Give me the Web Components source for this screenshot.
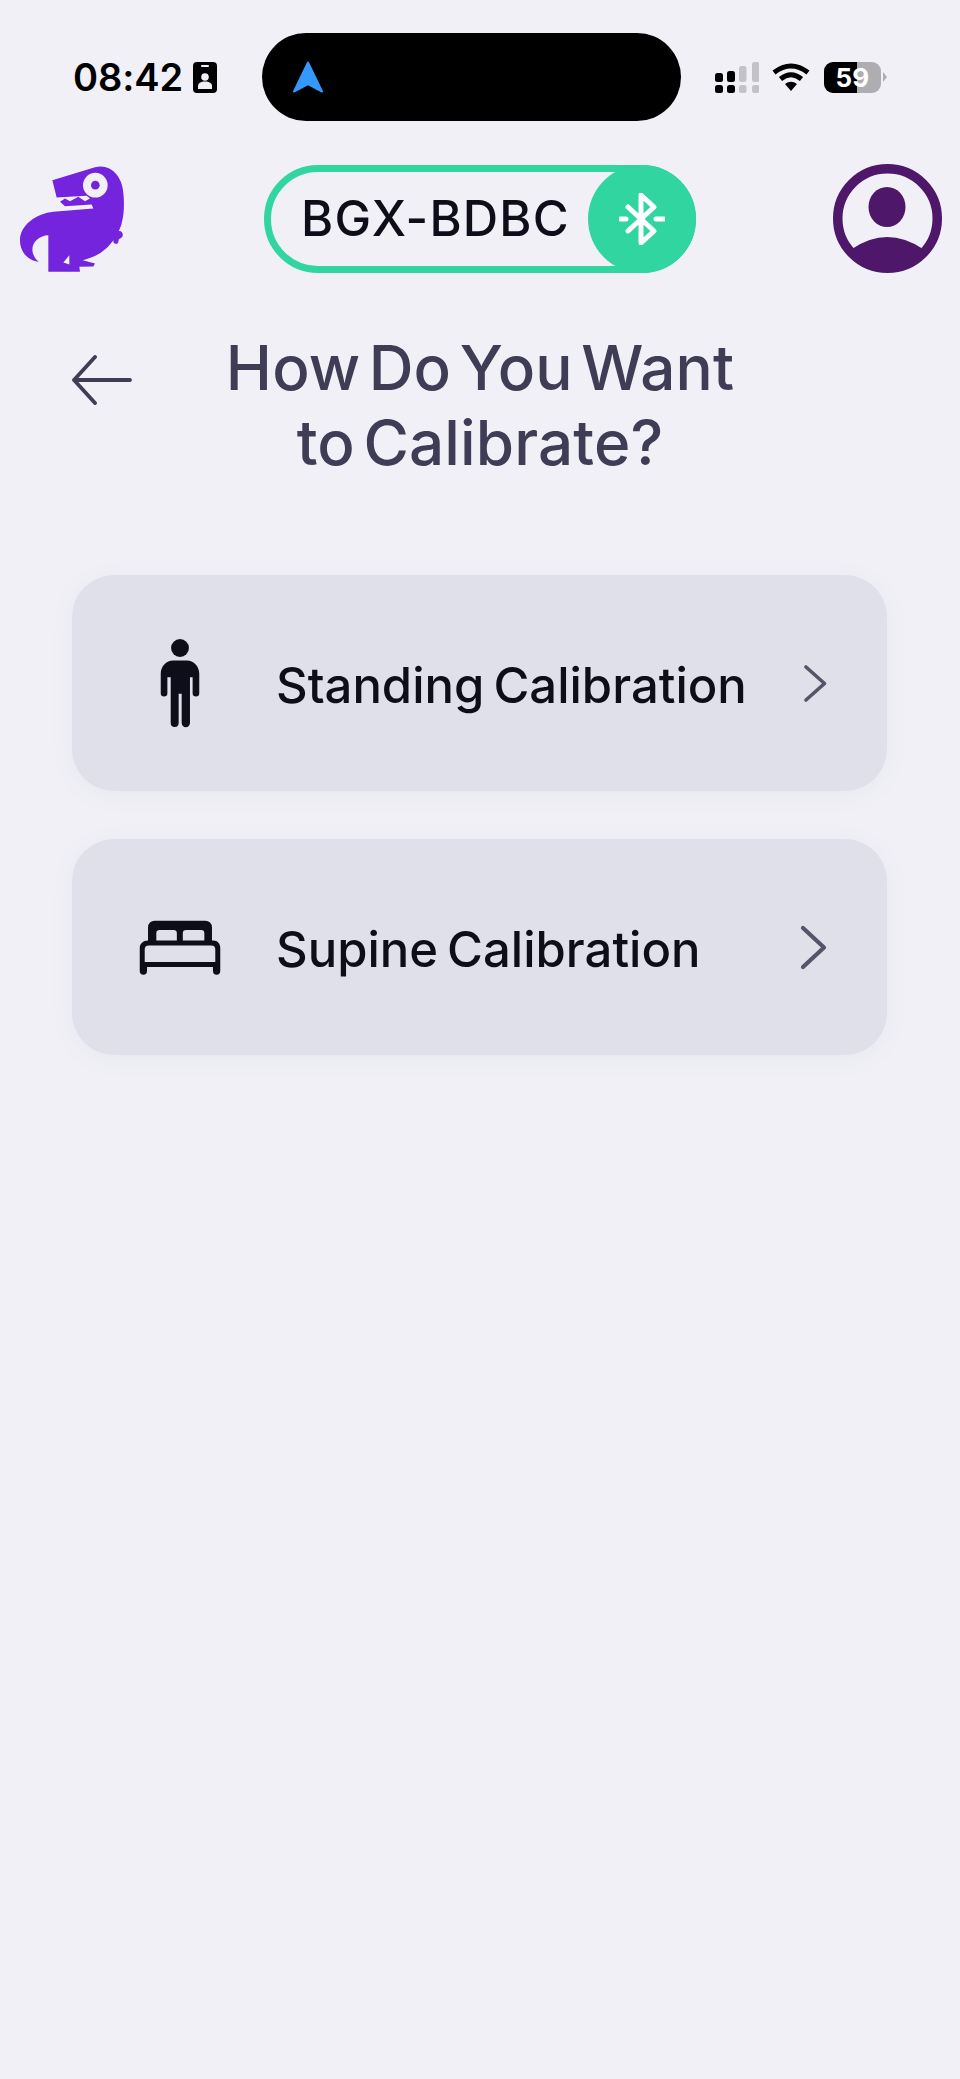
<!DOCTYPE html>
<html lang="en"><head><meta charset="utf-8"><title>Calibrate</title>
<style>
html,body{margin:0;padding:0;background:#f0f0f6}
body{width:960px;height:2079px;overflow:hidden;font-family:Inter,"Liberation Sans",sans-serif}
</style></head><body>
<app-screen>
  <status-bar></status-bar>
  <top-header name="BGX-BDBC"></top-header>
  <page-title>How Do You Want<br>to Calibrate?</page-title>
  <calibration-list>
    <calibration-card kind="standing">Standing Calibration</calibration-card>
    <calibration-card kind="supine">Supine Calibration</calibration-card>
  </calibration-list>
</app-screen>
<script>
function def(name,html,init){
  customElements.define(name,class extends HTMLElement{
    constructor(){super();this.attachShadow({mode:'open'}).innerHTML=html;}
    connectedCallback(){if(init)init(this,this.shadowRoot);}
  });
}
def('app-screen',`<style>:host{display:block;width:960px;height:2079px;background:#f0f0f6}</style><slot></slot>`);

def('status-bar',`<style>
:host{display:flex;align-items:center;padding-top:33px;height:88px;box-sizing:content-box}
.left{width:262px;box-sizing:border-box;padding-left:73px;display:flex;align-items:center;gap:12px}
.time{font:560 38px/1 Inter,sans-serif;color:#000;letter-spacing:-.1px;width:108px;white-space:nowrap}
.island{width:419px;height:88px;border-radius:44px;background:#000;display:flex;align-items:center;padding-left:31px;box-sizing:border-box}
.right{display:flex;align-items:center;padding-left:34px}
svg{display:block}
.bat{position:relative;display:flex;align-items:center;margin-left:14px}
.cell{width:57px;height:31px;border-radius:9px;background:linear-gradient(90deg,#000 0 33px,#aeaeb2 33px);color:#fff;font:700 26px/31px Inter,sans-serif;text-align:center;letter-spacing:.2px}
.nub{width:4px;height:10px;margin-left:2px;background:#aeaeb2;clip-path:polygon(0 0,100% 50%,0 100%)}
</style>
<div class="left"><span class="time">08:42</span>
<svg width="24" height="31" viewBox="0 0 24 31"><rect width="24" height="31" rx="4" fill="#000"/><rect x="8" y="3" width="8" height="2" rx="1" fill="#f0f0f6"/><circle cx="12" cy="15" r="3.800" fill="#f0f0f6"/><path d="M5 27v-3c0-3 3-4.500 7-4.500s7 1.500 7 4.500v3z" fill="#f0f0f6"/></svg></div>
<div class="island"><svg width="30" height="33" viewBox="0 0 30 33"><path d="M15 1.500 29 30.500 15 23 1 30.500Z" fill="#3399ff" stroke="#3399ff" stroke-width="2" stroke-linejoin="round"/></svg></div>
<div class="right">
<svg width="44" height="31" viewBox="0 0 44 31"><g fill="#000"><rect x="0" y="11" width="8" height="9" rx="2.500"/><rect x="12" y="9" width="8" height="11" rx="2.500"/><rect x="0" y="23" width="8" height="8" rx="2.500"/><rect x="12" y="23" width="8" height="8" rx="2.500"/></g><g fill="#c2c2c7"><rect x="24" y="4" width="7.500" height="16" rx="2.500"/><rect x="37" y="0" width="7.500" height="20" rx="2.500"/><rect x="24" y="23" width="7.500" height="8" rx="2.500"/><rect x="37" y="23" width="7.500" height="8" rx="2.500"/></g></svg>
<svg style="margin-left:13px" width="38" height="29" viewBox="0 0 38 29"><g fill="none" stroke="#000" stroke-width="5" stroke-linecap="butt"><path d="M2 9.500Q19-3.500 36 9.500"/><path d="M8.500 16Q19 7.500 29.500 16"/></g><path d="M13 21Q19 16.500 25 21L19 28Z" fill="#000"/></svg>
<div class="bat"><div class="cell">59</div><div class="nub"></div></div>
</div>`);

def('top-header',`<style>
:host{display:flex;align-items:center;height:109px;margin-top:43px;padding-left:20px}
svg{display:block;flex:none}
.pill{margin-left:139px;width:432px;height:108px;box-sizing:border-box;border:7px solid #30d5a0;border-radius:54px;display:flex;align-items:center;position:relative;padding-left:30px}
.name{font:500 49px/1 Inter,sans-serif;color:#0e0e1a;letter-spacing:1.200px;white-space:nowrap}
.bt{position:absolute;right:-7px;top:-7px;width:108px;height:108px;border-radius:50%;background:#30d5a0;display:flex;align-items:center;justify-content:center}
.avatar{margin-left:137px}
</style>
<svg width="105" height="106" viewBox="30 33 315 317"><path fill="#7424dc" fill-rule="evenodd" d="M127 75 255 36C300 25 340 60 341 125 344 170 338 205 326 228 332 225 340 232 338 242 336 250 328 250 326 254 326 260 324 268 316 266 310 264 308 256 312 252 290 285 260 305 218 315L255 325 250 334 208 335 210 350H115V240C85 240 58 268 70 298 74 308 80 316 87 320 60 318 30 295 30 255 30 210 80 175 130 170L250 160 245 148 165 153 150 140 165 130 180 138 205 125 225 138 240 130 230 122 140 127ZM160 322 178 328V300Z"/><circle cx="256" cy="90" r="37" fill="#f0f0f6"/><circle cx="256" cy="90" r="13" fill="#7424dc"/></svg>
<div class="pill"><span class="name"></span><div class="bt"><svg width="46" height="52" viewBox="0 0 46 52"><g fill="none" stroke="#fff" stroke-width="5" stroke-linecap="round" stroke-linejoin="round"><path d="M9 14 35 38 22 50V2L35 14 9 38"/><path d="M1 26H7M37 26H45"/></g></svg></div></div>
<svg class="avatar" width="109" height="109" viewBox="0 0 109 109"><circle cx="54.500" cy="54.500" r="49.750" fill="none" stroke="#4e1769" stroke-width="9.500"/><ellipse cx="54" cy="43" rx="18.500" ry="20" fill="#4e1769"/><path d="M19 85Q54 61 90 85A47 47 0 0 1 19 85Z" fill="#4e1769"/></svg>`,
(el,root)=>{root.querySelector('.name').textContent=el.getAttribute('name');});

def('page-title',`<style>
:host{display:grid;grid-template-columns:60px 1fr 60px;margin:57px 72px 95px;align-items:start}
h1{margin:0;text-align:center;font:540 62px/75px Inter,sans-serif;color:#3f3d56;letter-spacing:.1px;word-spacing:-8px;white-space:nowrap}
svg{display:block;margin-top:25px}
</style>
<svg width="60" height="50" viewBox="0 0 60 50"><path d="M58 25H2M23 2 2 25 23 48" fill="none" stroke="#3f3d56" stroke-width="3.800" stroke-linecap="round" stroke-linejoin="round"/></svg>
<h1><slot></slot></h1><div></div>`);

def('calibration-list',`<style>:host{display:flex;flex-direction:column;gap:48px;margin:0 73px 0 72px}</style><slot></slot>`);

const ICONS={
 standing:`<svg width="40" height="89" viewBox="300 235 120 268"><circle cx="360" cy="262" r="27" fill="#0e0e1a"/><path fill="#0e0e1a" d="M340 300H380C402 300 418 318 418 340V398A10 10 0 0 1 398 398V350H390V488A12 12 0 0 1 365 488V400H356V488A12 12 0 0 1 332 488V350H322V398A10 10 0 0 1 302 398V340C302 318 318 300 340 300Z"/></svg>`,
 supine:`<svg width="82" height="55" viewBox="238 268 247 166"><path fill="#0e0e1a" fill-rule="evenodd" d="M285 270H438A20 20 0 0 1 458 290V330H462C475 330 483 340 483 352V422A11 11 0 0 1 461 422V410H262V422A11 11 0 0 1 240 422V352C240 340 250 330 265 330V290A20 20 0 0 1 285 270ZM290 330V308A10 10 0 0 1 300 298H342A10 10 0 0 1 352 308V330ZM370 330V308A10 10 0 0 1 380 298H425A10 10 0 0 1 435 308V330ZM255 395V357A12 12 0 0 1 267 345H456A12 12 0 0 1 468 357V395Z"/></svg>`
};
const CHEV={
 standing:`<svg width="23" height="37" viewBox="0 0 23 37"><path d="M2 2 20.500 18.500 2 35" fill="none" stroke="#55556a" stroke-width="3.600" stroke-linecap="round" stroke-linejoin="round"/></svg>`,
 supine:`<svg width="27" height="45" viewBox="0 0 27 45"><path d="M3 3 24 22.500 3 42" fill="none" stroke="#55556a" stroke-width="4.200" stroke-linecap="round" stroke-linejoin="round"/></svg>`
};
def('calibration-card',`<style>
:host{display:flex;align-items:center;height:216px;border-radius:42px;background:#e0e0ea;box-shadow:0 4px 24px rgba(120,120,150,.06)}
.icon{width:100px;margin-left:58px;display:flex;justify-content:center;flex:none}
svg{display:block}
.text{margin-left:46px;flex:1;font:540 49px/1 Inter,sans-serif;color:#0e0e1a;letter-spacing:0;word-spacing:-4px;white-space:nowrap;padding-top:5px}
.chev{flex:none;display:flex;margin-right:60px}
</style>
<div class="icon"></div><div class="text"><slot></slot></div><div class="chev"></div>`,
(el,root)=>{const k=el.getAttribute('kind');root.querySelector('.icon').innerHTML=ICONS[k];root.querySelector('.chev').innerHTML=CHEV[k];});
</script>
</body></html>
